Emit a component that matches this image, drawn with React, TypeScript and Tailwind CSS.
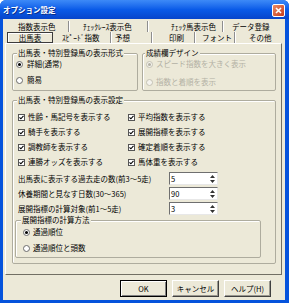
// オプション設定ダイアログ（XP風）

const font = "font-['Noto_Sans_CJK_JP','Noto_Sans',sans-serif]";

function Radio({ on, off }: { on?: boolean; off?: boolean }) {
  return (
    <span
      className={`flex h-[7px] w-[7px] shrink-0 items-center justify-center rounded-full border ${
        off ? 'border-[#c4c2b4] bg-[#f4f3ee]' : 'border-[#6b6b6b] bg-white'
      }`}
    >
      {on && <span className={`h-[3px] w-[3px] rounded-full ${off ? 'bg-[#b4b2a6]' : 'bg-black'}`} />}
    </span>
  );
}

function Check() {
  return (
    <span className="flex h-[7px] w-[7px] shrink-0 items-center justify-center border border-[#555] bg-white">
      <svg width="5" height="5" viewBox="0 0 5 5">
        <path d="M0.5 2.4 L1.9 3.8 L4.5 0.9" fill="none" stroke="#000" strokeWidth="1.1" />
      </svg>
    </span>
  );
}

function Spin({ value }: { value: string }) {
  return (
    <div className="flex h-[13px] w-[49px] border border-t-[#6f6f6f] border-l-[#6f6f6f] border-r-[#e8e8e8] border-b-[#e8e8e8] bg-white">
      <span className="flex-1 pl-[1px] leading-[11px]">{value}</span>
      <span className="flex w-[9px] items-center justify-center">
        <svg width="5" height="8" viewBox="0 0 5 8">
          <path d="M2.5 0 L5 3 L0 3 Z M2.5 8 L5 5 L0 5 Z" fill="#333" />
        </svg>
      </span>
    </div>
  );
}

function Btn({ label, main }: { label: string; main?: boolean }) {
  return (
    <div
      className={`flex h-[17px] w-[47px] items-center justify-center border ${
        main
          ? 'border-black shadow-[inset_1px_1px_0_#fff,inset_-1px_-1px_0_#808080]'
          : 'border-t-white border-l-white border-r-[#404040] border-b-[#404040] shadow-[inset_-1px_-1px_0_#9a9890]'
      }`}
    >
      {label}
    </div>
  );
}

export default function App() {
  return (
    <div className={`flex h-[303px] w-[289px] flex-col overflow-hidden rounded-t-[6px] bg-[#0553dc] ${font} text-[7.5px] leading-[10px] text-black`}>
      {/* タイトルバー */}
      <div className="flex h-[19px] shrink-0 items-start justify-between bg-gradient-to-b from-[#3d8af7] via-[#0a5be8] to-[#0745cb] px-[3px]">
        <span className="mt-[5px] font-bold text-white [text-shadow:1px_1px_0_#0b2e8a]">オプション設定</span>
        <span className="mt-[4px] mr-[1px] flex h-[13px] w-[13px] items-center justify-center rounded-[2px] border border-white bg-gradient-to-br from-[#eb8a64] to-[#c5391a]">
          <svg width="7" height="7" viewBox="0 0 7 7">
            <path d="M1 1 L6 6 M6 1 L1 6" stroke="#fff" strokeWidth="1.6" />
          </svg>
        </span>
      </div>

      <div className="mb-[3px] ml-[3px] mr-[4px] flex flex-1 flex-col bg-[#ece9d8] pt-[2px]">
        {/* タブ 1段目 */}
        <div className="ml-[2px] flex h-[11px]">
          <div className="w-[3px]" />
          <div className="w-[60px] pl-[10px] leading-[11px]">指数表示色</div>
          <div className="w-[79px] border-l border-[#8e8e8e] pl-[14px] leading-[11px] shadow-[inset_1px_0_0_#fff]">ﾁｪｯｸﾚｰｽ表示色</div>
          <div className="w-[75px] border-l border-[#8e8e8e] pl-[23px] leading-[11px] shadow-[inset_1px_0_0_#fff]">ﾁｪｯｸ馬表示色</div>
          <div className="w-[59px] border-l border-[#8e8e8e] pl-[9px] leading-[11px] shadow-[inset_1px_0_0_#fff]">データ登録</div>
        </div>
        {/* タブ 2段目 */}
        <div className="ml-[2px] flex h-[11px]">
          <div className="ml-[2px] w-[46px] border border-[#3c3c3c] text-center leading-[9px] shadow-[inset_1px_1px_0_#fff]">出馬表</div>
          <div className="w-[57px] pl-[9px] leading-[11px]">ｽﾋﾟｰﾄﾞ指数</div>
          <div className="w-[41px] border-l border-[#8e8e8e] pl-[4px] leading-[11px] shadow-[inset_1px_0_0_#fff]">予想</div>
          <div className="w-[43px] border-l border-[#8e8e8e] pl-[17px] leading-[11px] shadow-[inset_1px_0_0_#fff]">印刷</div>
          <div className="w-[40px] border-l border-[#8e8e8e] pl-[7px] leading-[11px] shadow-[inset_1px_0_0_#fff]">フォント</div>
          <div className="w-[47px] border-l border-[#8e8e8e] pl-[14px] leading-[11px] shadow-[inset_1px_0_0_#fff]">その他</div>
        </div>

        {/* タブパネル */}
        <div className="ml-[2px] mr-[3px] flex h-[232px] flex-col border border-t-white border-l-white border-r-[#716f64] border-b-[#716f64]">
          <div className="ml-[6px] mt-[4px] flex gap-[4px]">
            <fieldset className="h-[43px] w-[126px] rounded-[2px] border border-[#aeac9e] pl-[3px] shadow-[inset_1px_1px_0_#fff]">
              <legend className="ml-[1px] bg-[#ece9d8] px-[1px]">出馬表・特別登録馬の表示形式</legend>
              <div className="flex flex-col gap-[6px] pt-[1px]">
                <div className="flex h-[10px] items-center gap-[4px]"><Radio on />詳細(通常)</div>
                <div className="flex h-[10px] items-center gap-[4px]"><Radio />簡易</div>
              </div>
            </fieldset>
            <fieldset className="h-[43px] w-[134px] rounded-[2px] border border-[#aeac9e] pl-[3px] shadow-[inset_1px_1px_0_#fff]">
              <legend className="-ml-[1px] bg-[#ece9d8] px-[1px]">成績欄デザイン</legend>
              <div className="flex flex-col gap-[8px] pt-[1px] text-[#b3b1a4]">
                <div className="flex h-[10px] items-center gap-[3px]"><Radio on off />スピード指数を大きく表示</div>
                <div className="flex h-[10px] items-center gap-[3px]"><Radio off />指数と着順を表示</div>
              </div>
            </fieldset>
          </div>

          <fieldset className="ml-[6px] mt-[4px] w-[264px] rounded-[2px] border border-[#aeac9e] pb-[5px] pl-[5px] shadow-[inset_1px_1px_0_#fff]">
            <legend className="-ml-[1px] bg-[#ece9d8] px-[1px]">出馬表・特別登録馬の表示設定</legend>
            <div className="grid grid-cols-[110px_1fr] gap-y-[5px] pt-[7px]">
              <div className="flex h-[10px] items-center gap-[3px]"><Check />性齢・馬記号を表示する</div>
              <div className="flex h-[10px] items-center gap-[3px]"><Check />平均指数を表示する</div>
              <div className="flex h-[10px] items-center gap-[3px]"><Check />騎手を表示する</div>
              <div className="flex h-[10px] items-center gap-[3px]"><Check />展開指標を表示する</div>
              <div className="flex h-[10px] items-center gap-[3px]"><Check />調教師を表示する</div>
              <div className="flex h-[10px] items-center gap-[3px]"><Check />確定着順を表示する</div>
              <div className="flex h-[10px] items-center gap-[3px]"><Check />連勝オッズを表示する</div>
              <div className="flex h-[10px] items-center gap-[3px]"><Check />馬体重を表示する</div>
            </div>
            <div className="mt-[5px] flex flex-col gap-[2px]">
              <div className="flex h-[13px] items-center">
                <span className="w-[151px]">出馬表に表示する過去走の数(前3～5走)</span>
                <Spin value="5" />
              </div>
              <div className="flex h-[13px] items-center">
                <span className="w-[151px]">休養期間と見なす日数(30～365)</span>
                <Spin value="90" />
              </div>
              <div className="flex h-[13px] items-center">
                <span className="w-[151px]">展開指標の計算対象(前1～5走)</span>
                <Spin value="3" />
              </div>
            </div>
            <fieldset className="-ml-[3px] w-[246px] rounded-[2px] border border-[#aeac9e] pb-[4px] pl-[7px] shadow-[inset_1px_1px_0_#fff]">
              <legend className="-ml-[2px] bg-[#ece9d8] px-[1px]">展開指標の計算方法</legend>
              <div className="flex flex-col gap-[6px] pt-[2px]">
                <div className="flex h-[10px] items-center gap-[3px]"><Radio on />通過順位</div>
                <div className="flex h-[10px] items-center gap-[3px]"><Radio />通過順位と頭数</div>
              </div>
            </fieldset>
          </fieldset>
        </div>

        {/* ボタン */}
        <div className="mt-[5px] flex gap-[5px] pl-[117px]">
          <Btn label="OK" main />
          <Btn label="キャンセル" />
          <Btn label="ヘルプ(H)" />
        </div>
      </div>
    </div>
  );
}
